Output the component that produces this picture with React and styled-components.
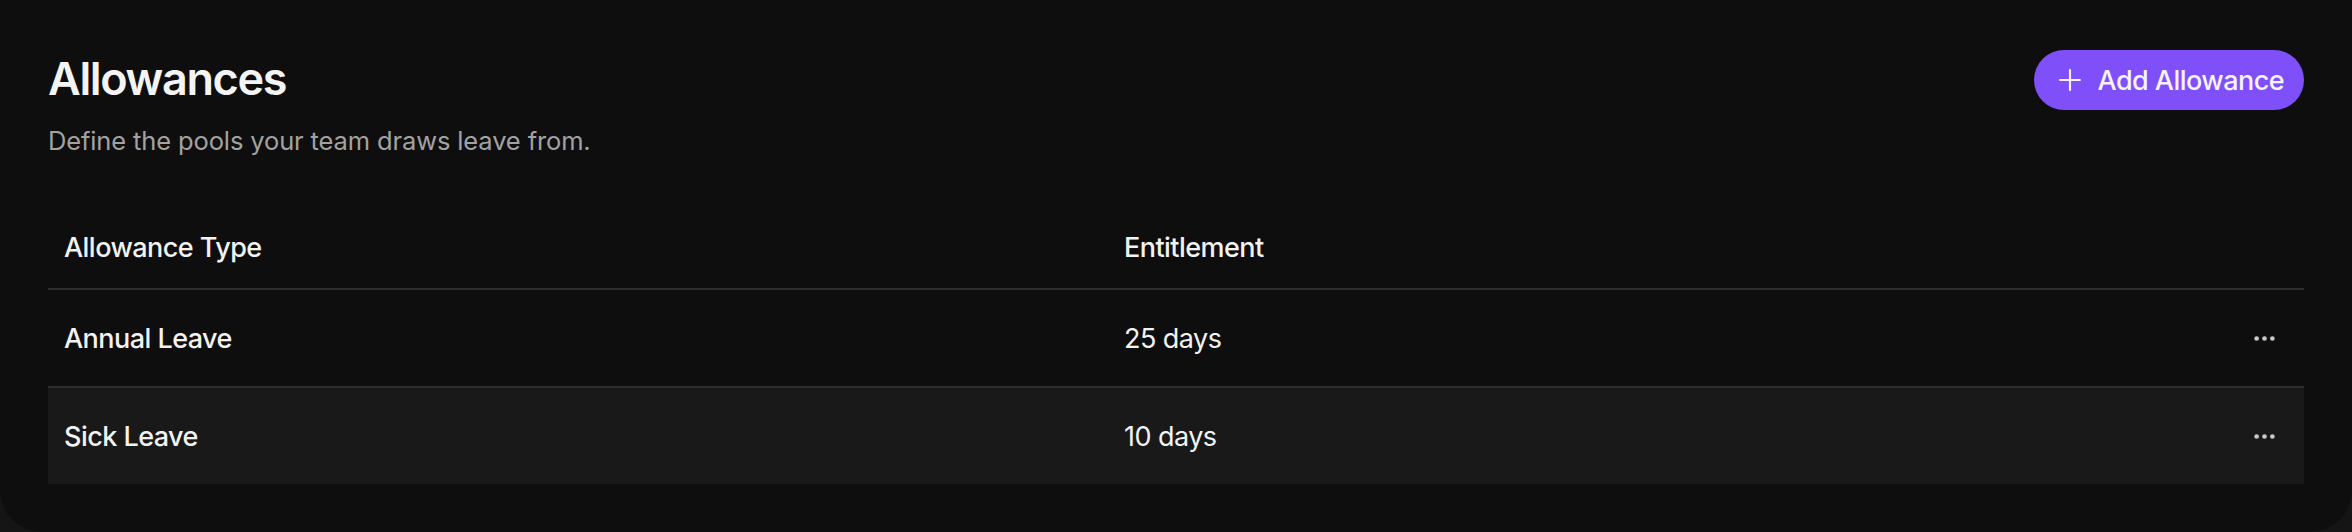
import React from 'react'
import styled, { createGlobalStyle } from 'styled-components'
import { Plus, Ellipsis } from 'lucide-react'

const GlobalStyle = createGlobalStyle`
    html, body {
        margin: 0;
        padding: 0;
        background: #151515;
    }
    body {
        font-family: Inter, "Noto Sans", "Liberation Sans", sans-serif;
        -webkit-font-smoothing: antialiased;
    }
`

const Card = styled.div`
    background: #0e0e0e;
    height: 532px;
    box-sizing: border-box;
    padding: 52px 48px 0;
    border-radius: 0 0 42px 42px;
`

const Header = styled.div`
    display: flex;
    justify-content: space-between;
    align-items: flex-start;
`

const TitleBlock = styled.div``

const Title = styled.h1`
    margin: 0;
    font-size: 45px;
    line-height: 54px;
    font-weight: 600;
    letter-spacing: -0.03em;
    color: #f4f4f4;
`

const Subtitle = styled.p`
    margin: 19px 0 0;
    font-size: 25.5px;
    line-height: 32px;
    font-weight: 400;
    letter-spacing: -0.005em;
    color: #a2a2a2;
`

const AddButton = styled.button`
    display: flex;
    align-items: center;
    gap: 11px;
    height: 60px;
    margin-top: -2px;
    padding: 0 20px 0 19px;
    border: none;
    border-radius: 30px;
    background: #7f4ff9;
    color: #f6f2ff;
    font-family: inherit;
    font-size: 27px;
    font-weight: 500;
    letter-spacing: -0.02em;
    cursor: pointer;
`

const Table = styled.div`
    margin-top: 51px;
`

const Row = styled.div`
    display: grid;
    grid-template-columns: 1060px 1fr 80px;
    align-items: center;
    height: ${p => p.$head ? '80px' : '96px'};
    border-top: ${p => p.$head ? 'none' : '2px solid #2c2c2c'};
    background: ${p => p.$shaded ? '#191919' : 'transparent'};
`

const Cell = styled.div`
    padding: 0 16px;
    font-size: 27px;
    font-weight: ${p => p.$weight || 500};
    letter-spacing: -0.02em;
    color: #f2f2f2;
`

const HeadCell = styled(Cell)`
    padding-bottom: 2px;
`

const ActionCell = styled.div`
    display: flex;
    justify-content: flex-end;
    padding-right: 16px;
`

const MoreButton = styled.button`
    width: 48px;
    height: 48px;
    display: flex;
    align-items: center;
    justify-content: center;
    border: none;
    background: transparent;
    color: #c9c9c9;
    padding: 0;
    cursor: pointer;
`

const allowances = [
    { id: 1, name: 'Annual Leave', days: 25 },
    { id: 2, name: 'Sick Leave', days: 10 },
]

const App = () => {
  return (
    <>
      <GlobalStyle />
      <Card>
        <Header>
          <TitleBlock>
            <Title>Allowances</Title>
            <Subtitle>Define the pools your team draws leave from.</Subtitle>
          </TitleBlock>
          <AddButton>
            <Plus size={34} strokeWidth={1.5} />
            Add Allowance
          </AddButton>
        </Header>

        <Table>
          <Row $head>
            <HeadCell>Allowance Type</HeadCell>
            <HeadCell>Entitlement</HeadCell>
            <div />
          </Row>
          {allowances.map((a, i) => (
            <Row key={a.id} $shaded={i === 1}>
              <Cell>{a.name}</Cell>
              <Cell $weight={400}>{a.days} days</Cell>
              <ActionCell>
                <MoreButton aria-label="More">
                  <Ellipsis size={27} strokeWidth={2.2} />
                </MoreButton>
              </ActionCell>
            </Row>
          ))}
        </Table>
      </Card>
    </>
  )
}

export default App
